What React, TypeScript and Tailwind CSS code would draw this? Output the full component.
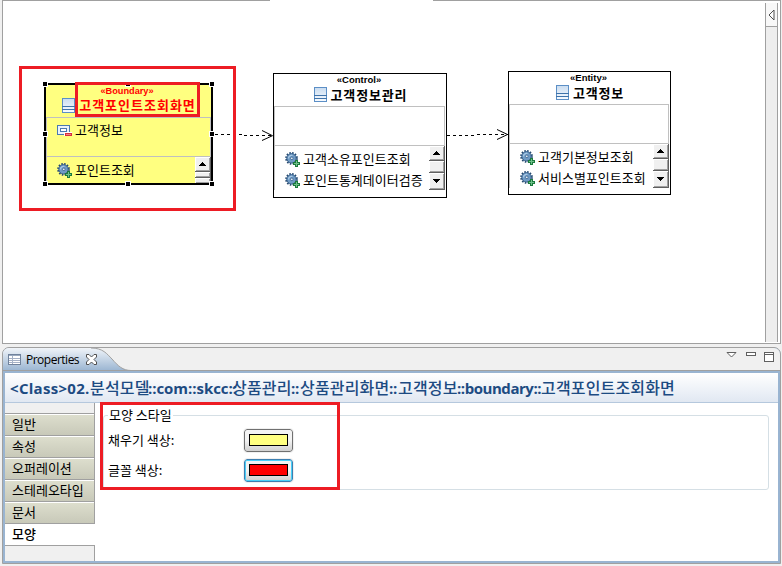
import React from "react";
import type { ReactNode } from "react";

const KR = "font-['Noto_Sans_CJK_KR',sans-serif]";

function ClassIcon() {
  return (
    <svg width="13" height="15" viewBox="0 0 13 15" className="block shrink-0" shapeRendering="crispEdges">
      <defs>
        <linearGradient id="cls" x1="0" y1="0" x2="0" y2="1">
          <stop offset="0" stopColor="#c9dcf0" />
          <stop offset="1" stopColor="#f8fbff" />
        </linearGradient>
      </defs>
      <rect x="0.5" y="0.5" width="12" height="14" fill="url(#cls)" stroke="#5c8fc6" />
      <path d="M0 8.5h13M0 11.5h13" stroke="#3f73aa" />
    </svg>
  );
}

function GearIcon() {
  return (
    <svg width="15" height="15" viewBox="0 0 15 15" className="block shrink-0">
      <circle cx="6.5" cy="6.3" r="5.5" fill="none" stroke="#274a70" strokeWidth="1.8" strokeDasharray="1.5 1.38" />
      <circle cx="6.5" cy="6.3" r="4.7" fill="#6f9ac4" stroke="#315b88" strokeWidth="1" />
      <path d="M3.5 6.5a3 3 0 0 1 4-3" stroke="#a8c8e4" strokeWidth="1.3" fill="none" />
      <circle cx="6.8" cy="6.3" r="1.3" fill="#eef5fb" stroke="#315b88" strokeWidth="0.8" />
      <path d="M11.5 8v7M8 11.5h7" stroke="#1b7a3c" strokeWidth="3" />
      <path d="M11.5 9v5M9 11.5h5" stroke="#6fc08a" strokeWidth="1" />
    </svg>
  );
}

function AttributeIcon() {
  return (
    <svg width="15" height="12" viewBox="0 0 15 12" className="block shrink-0" shapeRendering="crispEdges">
      <rect x="0.5" y="0.5" width="12" height="9" fill="#eaf2fb" stroke="#4a79b0" />
      <rect x="3.5" y="3.5" width="6" height="3" fill="#fff" stroke="#4a79b0" />
      <rect x="7" y="7" width="8" height="4" fill="#fff" />
      <rect x="8" y="8" width="7" height="3" fill="#d8303c" />
      <rect x="9" y="9" width="5" height="1" fill="#f08088" />
    </svg>
  );
}

function ScrollButton({ dir, className }: { dir?: "up" | "down"; className: string }) {
  return (
    <div
      className={`flex w-full shrink-0 items-center justify-center border-b border-r border-[#606060] bg-[#f0f0f0] shadow-[inset_1px_1px_0_#fff,inset_-1px_-1px_0_#a0a0a0] ${className}`}
    >
      {dir && (
        <svg width="7" height="4" viewBox="0 0 7 4" shapeRendering="crispEdges">
          <path
            d={dir === "up" ? "M3 0h1v1h1v1h1v1h1v1H0V3h1V2h1V1h1z" : "M0 0h7v1H6v1H5v1H4v1H3V3H2V2H1V1H0z"}
            fill="#000"
          />
        </svg>
      )}
    </div>
  );
}

function Operation({ children }: { children: ReactNode }) {
  return (
    <div className="flex h-[21px] items-center gap-[3px]">
      <GearIcon />
      <span className="pb-[2px] text-[13px] leading-[19px]">{children}</span>
    </div>
  );
}

function ClassNode({
  className,
  stereotype,
  name,
  operations,
}: {
  className: string;
  stereotype: string;
  name: string;
  operations: string[];
}) {
  return (
    <div className={`absolute flex flex-col border border-black bg-white ${className}`}>
      <div className="flex h-[32px] shrink-0 flex-col items-center">
        <span className="font-['Liberation_Sans',sans-serif] mr-[2px] h-[13px] text-[9.5px] font-bold leading-[12px]">
          {stereotype}
        </span>
        <div className="ml-px flex h-[15px] items-center gap-[4px]">
          <ClassIcon />
          <span className="text-[13px] font-bold leading-[15px] tracking-[0.85px]">{name}</span>
        </div>
      </div>
      <div className="mr-px h-[39px] shrink-0 border border-b-0 border-[#c0c0c0]" />
      <div className="mr-px flex h-[45px] border-l border-t border-[#c0c0c0]">
        <div className="min-w-0 grow whitespace-nowrap pl-[10px] pt-[3px]">
          {operations.map((op) => (
            <Operation key={op}>{op}</Operation>
          ))}
        </div>
        <div className="flex w-[16px] shrink-0 flex-col">
          <ScrollButton dir="up" className="h-[15px]" />
          <ScrollButton className="h-[12px]" />
          <ScrollButton dir="down" className="h-[17px]" />
        </div>
      </div>
    </div>
  );
}

function BoundaryNode() {
  return (
    <div className="absolute left-[44px] top-[83px] flex h-[102px] w-[169px] flex-col border-2 border-black bg-[#ffff80]">
      <div className="flex h-[32px] shrink-0 flex-col items-center text-[#ff0000]">
        <span className="font-['Liberation_Sans',sans-serif] mr-[3px] h-[12px] text-[9.2px] font-bold leading-[12px]">«Boundary»</span>
        <div className="ml-px flex h-[17px] items-center gap-[4px]">
          <ClassIcon />
          <span className="pb-[2px] text-[13px] font-bold leading-[15px] tracking-[1px]">고객포인트조회화면</span>
        </div>
      </div>
      <div className="flex h-[39px] shrink-0 border border-b-0 border-[#c0c0c0] pl-[10px] pt-[2px]">
        <div className="flex h-[21px] items-center gap-[3px]">
          <AttributeIcon />
          <span className="pb-[2px] text-[13px] leading-[19px]">고객정보</span>
        </div>
      </div>
      <div className="flex h-[27px] border-l border-t border-[#c0c0c0]">
        <div className="grow pl-[10px] pt-[3px]">
          <Operation>포인트조회</Operation>
        </div>
        <div className="flex w-[16px] flex-col overflow-hidden">
          <ScrollButton dir="up" className="h-[15px]" />
          <ScrollButton className="h-[6px]" />
          <ScrollButton className="h-[6px]" />
        </div>
      </div>
    </div>
  );
}

const handles = [
  "left-[43px] top-[82px]",
  "left-[126px] top-[82px]",
  "left-[210px] top-[82px]",
  "left-[43px] top-[132px]",
  "left-[210px] top-[132px]",
  "left-[43px] top-[182px]",
  "left-[126px] top-[182px]",
  "left-[210px] top-[182px]",
];

const sideTabs = ["일반", "속성", "오퍼레이션", "스테레오타입", "문서"];

const path: [string, string][] = [
  ["<Class>02.", "w-[80px] tracking-[0.3px]"],
  ["분석모델", "w-[58px]"],
  ["::com::skcc::", "w-[84px] tracking-[-0.05px]"],
  ["상품관리", "w-[59px]"],
  ["::", "w-[9px] tracking-[-0.3px]"],
  ["상품관리화면", "w-[89px]"],
  ["::", "w-[9px] tracking-[-0.3px]"],
  ["고객정보", "w-[59px]"],
  ["::boundary::", "w-[84px] tracking-[-0.45px]"],
  ["고객포인트조회화면", "w-[140px]"],
];

function ColorRow({ label, button, swatch }: { label: string; button: string; swatch: string }) {
  return (
    <div className="flex h-[30px] items-center">
      <span className="w-[136px] text-[13px]">{label}</span>
      <div
        className={`flex h-[23px] w-[49px] items-center justify-center rounded-[3px] border bg-gradient-to-b from-[#f3f3f3] from-50% to-[#d0d0d0] outline outline-[#f0f0f0] ${button}`}
      >
        <div className={`h-[12px] w-[39px] border border-black ${swatch}`} />
      </div>
    </div>
  );
}

export default function App() {
  return (
    <div className={`relative flex h-[566px] w-[782px] flex-col overflow-hidden bg-[#f0f0f0] pl-[2px] text-black ${KR}`}>
      {/* Diagram editor */}
      <div className="flex h-[344px] w-[779px] shrink-0 justify-end border border-[#a0a0a0] bg-white pb-px pr-[2px] pt-[2px]">
        <div className="flex w-[13px] flex-col border-x border-[#a0a0a0] bg-[#eeeeee]">
          <div className="flex h-[24px] items-center justify-center border-b border-[#a0a0a0] bg-[#f8f8f8]">
            <svg width="7" height="12" viewBox="0 0 7 12">
              <path d="M6 1v10L1 6z" fill="#fff" stroke="#505050" />
            </svg>
          </div>
        </div>
      </div>
      <div className="absolute left-[270px] top-0 h-px w-[163px] bg-white" />

      <svg className="absolute left-0 top-0" width="782" height="340" fill="none" stroke="#000">
        <path d="M215 134.5H244M244 135.5H273" strokeDasharray="3 3" shapeRendering="crispEdges" />
        <path d="M262 130.5L272.5 135.7L262 140.5" />
        <path d="M447 135.5H477M477 134.5H508" strokeDasharray="3 3" shapeRendering="crispEdges" />
        <path d="M497 129.5L507.5 134.5L497 139.5" />
      </svg>

      <BoundaryNode />
      {handles.map((h) => (
        <div key={h} className={`absolute size-[4px] bg-black outline outline-white ${h}`} />
      ))}
      <ClassNode
        className="left-[273px] top-[73px] h-[125px] w-[174px]"
        stereotype="«Control»"
        name="고객정보관리"
        operations={["고객소유포인트조회", "포인트통계데이터검증"]}
      />
      <ClassNode
        className="left-[508px] top-[71px] h-[124px] w-[163px]"
        stereotype="«Entity»"
        name="고객정보"
        operations={["고객기본정보조회", "서비스별포인트조회"]}
      />
      <div className="absolute left-[19px] top-[66px] h-[145px] w-[217px] border-[3px] border-[#ed1c24]" />
      <div className="absolute left-[75px] top-[82px] h-[35px] w-[125px] border-[3px] border-[#ed1c24]" />

      {/* Properties view */}
      <div className="mt-[3px] flex h-[217px] w-[779px] shrink-0 flex-col rounded-t-[7px] border border-[#a0a0a0] bg-[#99b4d1]">
        <div className="relative flex h-[23px] shrink-0 items-center justify-between overflow-hidden rounded-t-[6px] border-b border-[#a0a0a0] bg-[#f0f0f0]">
          <svg className="absolute left-0 top-0" width="130" height="23" viewBox="0 0 130 23">
            <defs>
              <linearGradient id="tab" x1="0" y1="0" x2="0" y2="1">
                <stop offset="0" stopColor="#f0f4f9" />
                <stop offset="1" stopColor="#99b4d1" />
              </linearGradient>
            </defs>
            <path
              d="M0 23V0H90C100 0 104 6 109 11C115 18 120 22.5 128 22.5V23Z"
              fill="url(#tab)"
            />
            <path d="M88 0C100 0 104 6 109 11C115 18 120 22.5 128 22.5" fill="none" stroke="#a0a0a0" />
          </svg>
          <div className="relative flex items-center pl-[5px]">
            <svg width="13" height="11" viewBox="0 0 13 11" shapeRendering="crispEdges">
              <rect x="0.5" y="0.5" width="12" height="10" fill="#fff" stroke="#70829c" />
              <path d="M1 1.5h11" stroke="#9aaac0" />
              <path d="M1 4.5h11M1 6.5h11M1 8.5h11M4.5 2v8" stroke="#a5b1c6" />
            </svg>
            <span className="font-['Open_Sans',sans-serif] ml-[5px] w-[60px] pt-px text-[12px] leading-[20px] tracking-[-0.5px]">
              Properties
            </span>
            <svg width="11" height="11" viewBox="0 0 11 11">
              <path
                d="M.5.5H3L5.5 3L8 .5h2.5V3L8 5.5L10.500 8v2.500H8L5.500 8L3 10.500H.5V8L3 5.500L.5 3z"
                fill="#fff"
                stroke="#505050"
              />
            </svg>
          </div>
          <svg width="51" height="12" viewBox="0 0 51 12" className="mb-[5px] mr-[4px]" fill="#fff" stroke="#606060">
            <path d="M2 1.5h9L6.500 6z" />
            <path d="M21.500 1.500h9v3h-9z" shapeRendering="crispEdges" />
            <path d="M39.500 1.500h9v9h-9zM39.500 3.500h9" shapeRendering="crispEdges" />
          </svg>
        </div>
        <div className="mx-[2px] mb-[2px] mt-[2px] flex min-h-0 grow flex-col bg-white">
          <div className="font-['Open_Sans','Noto_Sans_CJK_KR',sans-serif] flex h-[30px] shrink-0 items-center whitespace-nowrap border-b border-[#b5c8dd] bg-gradient-to-b from-white to-[#e1e8f2] pl-[5px] pt-px text-[15px] font-bold text-[#1d4b82]">
            {path.map(([text, style], i) => (
              <span
                key={i}
                className={`shrink-0 ${style} ${i % 2 ? "text-[16px] font-medium tracking-[0.16px]" : ""}`}
              >
                {text}
              </span>
            ))}
          </div>
          <div className="flex min-h-0 grow">
            <div className="flex w-[90px] shrink-0 flex-col text-[13px]">
              <div className="h-[10px] shrink-0 border-r border-[#a0a0a0] bg-[#f0f0f0]" />
              {sideTabs.map((t) => (
                <div
                  key={t}
                  className="flex h-[22px] shrink-0 items-center border-r border-t border-[#a0a0a0] bg-gradient-to-b from-[#dedfce] to-[#c8c9b9] pb-[2px] pl-[7px] shadow-[inset_0_1px_0_#fff]"
                >
                  {t}
                </div>
              ))}
              <div className="flex h-[22px] shrink-0 items-center border-t border-[#a0a0a0] bg-white pb-[2px] pl-[7px] font-medium">
                모양
              </div>
              <div className="grow border-r border-t border-[#a0a0a0] bg-[#f0f0f0]" />
            </div>
            <fieldset className="ml-[8px] mt-[2px] h-[85px] w-[666px] rounded-[3px] border border-[#d5dfe5] pl-[4px]">
              <legend className="h-[20px] px-[1px] text-[13px] leading-[20px]">모양 스타일</legend>
              <ColorRow label="채우기 색상:" button="border-[#707070]" swatch="bg-[#ffff80]" />
              <ColorRow
                label="글꼴 색상:"
                button="border-[#3c7fb1] shadow-[inset_0_0_0_1px_#48d0f8]"
                swatch="bg-[#ff0000]"
              />
            </fieldset>
          </div>
        </div>
      </div>
      <div className="absolute left-[100px] top-[402px] h-[88px] w-[240px] border-[3px] border-[#ed1c24]" />
    </div>
  );
}
